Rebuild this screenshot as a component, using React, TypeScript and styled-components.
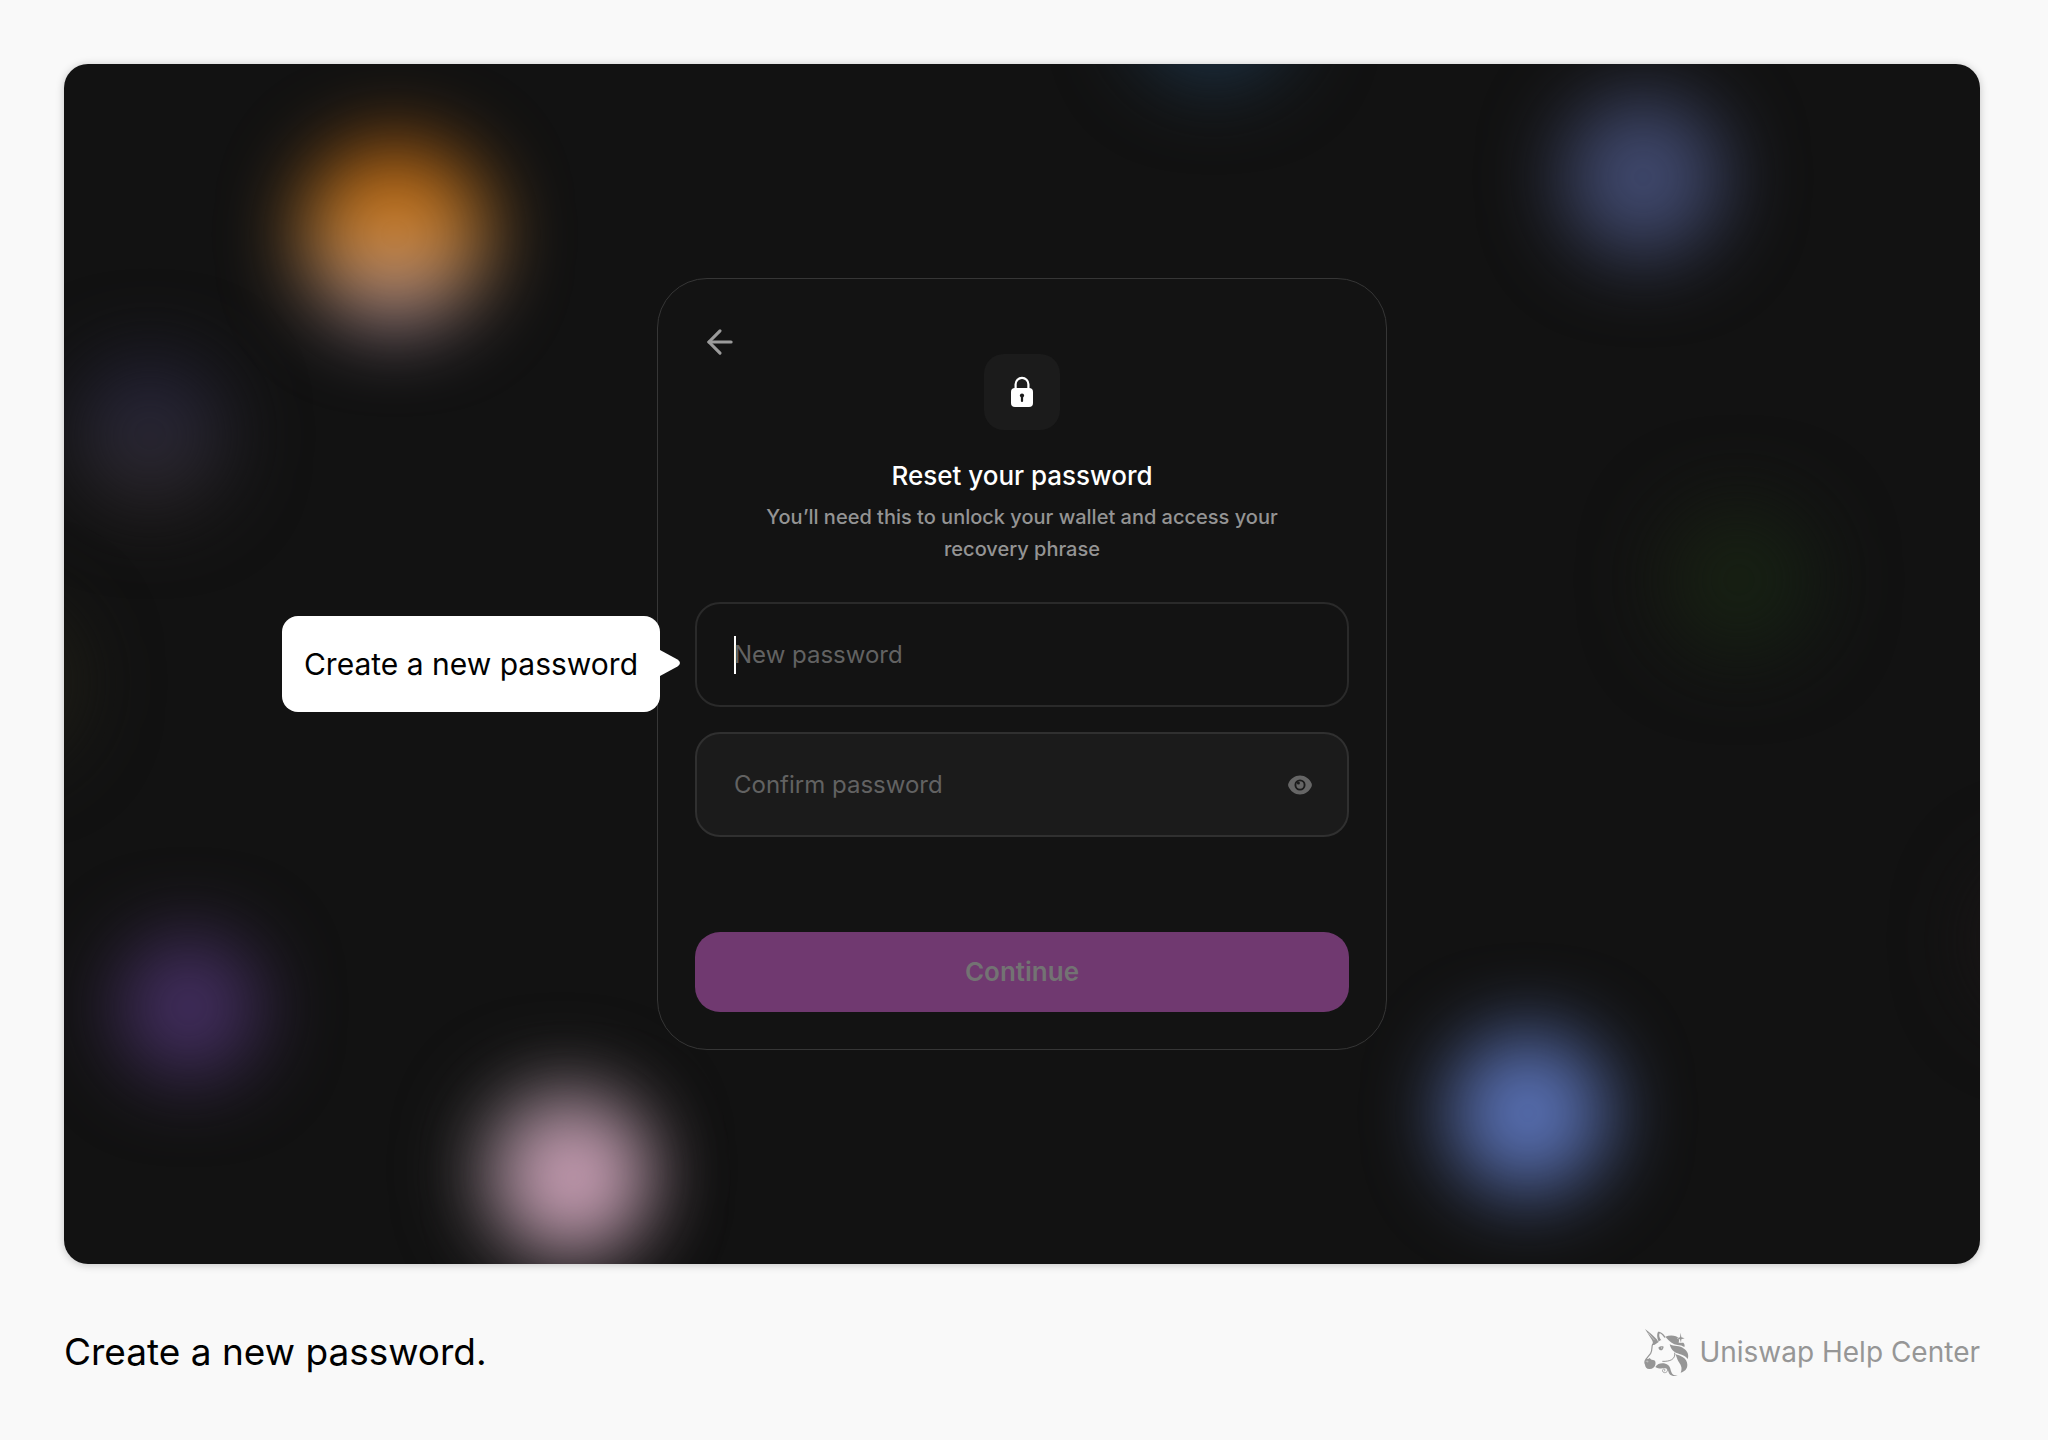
import React from "react";
import styled, { createGlobalStyle } from "styled-components";
import { ArrowLeft } from "lucide-react";

const GlobalStyle = createGlobalStyle`
  *, *::before, *::after { box-sizing: border-box; }
  body {
    margin: 0;
    background: #f9f9f9;
    color: #000;
    font-family: Inter, "Liberation Sans", sans-serif;
  }
`;

const Page = styled.div`
  display: flex;
  flex-direction: column;
  min-height: 100vh;
  padding: 64px 68px 0 64px;
`;

const Stage = styled.main`
  position: relative;
  flex: 1;
  display: flex;
  align-items: center;
  justify-content: center;
  overflow: hidden;
  border-radius: 24px;
  background: #121212;
  box-shadow: 0 1px 8px rgba(0, 0, 0, 0.22);
`;

const Glow = styled.span<{ $x: number; $y: number; $fill: string; $size?: number }>`
  position: absolute;
  left: ${(p) => p.$x}%;
  top: ${(p) => p.$y}%;
  width: ${(p) => p.$size ?? 160}px;
  height: ${(p) => p.$size ?? 160}px;
  border-radius: 50%;
  background: ${(p) => p.$fill};
  filter: blur(40px);
  transform: translate(-50%, -50%);
`;

const Card = styled.form`
  position: relative;
  display: flex;
  flex-direction: column;
  width: 730px;
  max-width: 100%;
  padding: 44px 37px 37px;
  border: 1px solid #363636;
  border-radius: 50px;
  background: #131313;
`;

const CardHeader = styled.header`
  display: grid;
  grid-template-columns: 1fr auto 1fr;
  align-items: start;
`;

const BackButton = styled.button`
  display: flex;
  justify-self: start;
  margin-left: 6px;
  padding: 0;
  border: 0;
  background: none;
  color: #9b9b9b;
  cursor: pointer;
`;

const LockTile = styled.div`
  display: flex;
  align-items: center;
  justify-content: center;
  width: 76px;
  height: 76px;
  margin-top: 31px;
  border-radius: 20px;
  background: #1b1b1b;
`;

const Title = styled.h1`
  margin: 29px 0 8px;
  color: #fff;
  font-size: 26px;
  font-weight: 500;
  line-height: 34px;
  text-align: center;
`;

const Subtitle = styled.p`
  margin: 0 60px 37px;
  color: #949494;
  font-size: 20px;
  font-weight: 500;
  line-height: 32px;
  text-align: center;
`;

const Fields = styled.div`
  display: flex;
  flex-direction: column;
  gap: 25px;
`;

const Field = styled.div<{ $active?: boolean }>`
  display: flex;
  align-items: center;
  height: 105px;
  padding: 0 35px 0 37px;
  border: 2px solid ${(p) => (p.$active ? "#2a2a2a" : "#303030")};
  border-radius: 25px;
  background: ${(p) => (p.$active ? "#131313" : "#1b1b1b")};
`;

const Caret = styled.span`
  width: 2px;
  height: 38px;
  margin-right: -2px;
  background: #fff;
`;

const PasswordInput = styled.input`
  flex: 1;
  min-width: 0;
  padding: 0;
  border: 0;
  outline: 0;
  background: transparent;
  color: #fff;
  font: 400 24px/32px Inter, "Liberation Sans", sans-serif;

  &::placeholder {
    color: #626262;
    opacity: 1;
  }
`;

const RevealButton = styled.button`
  display: flex;
  padding: 0;
  border: 0;
  background: none;
  color: #666;
  cursor: pointer;
`;

const ContinueButton = styled.button`
  height: 80px;
  margin-top: 95px;
  border: 0;
  border-radius: 25px;
  background: #703970;
  color: #737373;
  font: 600 26px/34px Inter, "Liberation Sans", sans-serif;
`;

const Callout = styled.div`
  position: absolute;
  top: 50%;
  right: calc(100% - 2px);
  display: flex;
  align-items: center;
  height: 96px;
  padding: 0 22px;
  border-radius: 16px;
  background: #fff;
  font-size: 30px;
  line-height: 40px;
  white-space: nowrap;
  transform: translateY(-50%);
`;

const CalloutPointer = styled.svg`
  position: absolute;
  left: 100%;
  top: 34px;
  fill: #fff;
`;

const Footer = styled.footer`
  display: flex;
  align-items: center;
  justify-content: space-between;
  min-height: 176px;
`;

const Caption = styled.p`
  margin: 0;
  font-size: 37px;
  line-height: 48px;
`;

const Brand = styled.div`
  display: flex;
  align-items: center;
  gap: 10px;
  color: #969696;
  font-size: 28px;
  line-height: 36px;
`;

const glows = [
  { x: 17.3, y: 14.2, fill: "linear-gradient(#b45e0a 10%, #d0862c 52%, #a58c9c 86%)", size: 184 },
  { x: 4.5, y: 30.8, fill: "linear-gradient(#232138 25%, #2e2c36 58%, #292123)", size: 150 },
  { x: 60, y: -5, fill: "#1d3347" },
  { x: 82.4, y: 9.4, fill: "#414a70" },
  { x: 87.4, y: 43, fill: "linear-gradient(110deg, #1a1f12, #142214)", size: 150 },
  { x: -3.5, y: 51.5, fill: "#201f16" },
  { x: 6.5, y: 78.6, fill: "#452f63", size: 140 },
  { x: 26, y: 92, fill: "#545153", size: 170 },
  { x: 26.6, y: 92.8, fill: "#d0a2ba", size: 134 },
  { x: 76.4, y: 87.4, fill: "#5971b5", size: 160 },
  { x: 104, y: 73, fill: "#1b1617" },
];

const LockIcon = () => (
  <svg width="24" height="32" viewBox="0 0 24 32" aria-hidden="true">
    <path d="M5.6 13V8.200a6.400 6.400 0 0 1 12.800 0V13" fill="none" stroke="#fff" strokeWidth="2.2" />
    <rect x="1" y="12" width="22" height="19" rx="4" fill="#fff" />
    <circle cx="12" cy="19.6" r="2.1" fill="#1b1b1b" />
    <path d="M12 19v6" stroke="#1b1b1b" strokeWidth="2.2" strokeLinecap="round" />
  </svg>
);

const EyeIcon = () => (
  <svg width="24" height="20" viewBox="0 0 24 20" aria-hidden="true">
    <path
      d="M12 .6C17.2.6 21.4 3.8 23.5 8.3c.5 1.1.5 2.3 0 3.4C21.4 16.2 17.2 19.4 12 19.4S2.6 16.2.5 11.7a4 4 0 0 1 0-3.4C2.6 3.8 6.8.6 12 .6Z"
      fill="currentColor"
    />
    <circle cx="12" cy="10" r="4.6" fill="currentColor" stroke="#1b1b1b" strokeWidth="1.9" />
    <circle cx="10.4" cy="7.9" r="1.5" fill="#1b1b1b" />
  </svg>
);

const UnicornLogo = () => (
  <svg width="45" height="48" viewBox="42 24 135 144" fill="currentColor" aria-hidden="true">
    <path d="M45 27C58 36 72 48 83 61L78 68 66 60C60 51 52 38 45 27Z" />
    <path d="M54 38L74 61" stroke="#f9f9f9" strokeWidth="1.5" />
    <path d="M85 62C81 53 80 42 84 35 94 35 102 43 107 52L103 53C98 46 94 41 89 40 86 45 88 54 94 61 90 61 88 63 85 66Z" />
    <path
      d="M81 64C77 68 75 71 68 73 64 80 68 90 62 100L47 119"
      fill="none"
      stroke="currentColor"
      strokeWidth="3.5"
    />
    <path d="M66 60L82 62 86 66 74 74 66 76C69 72 70 67 66 60Z" />
    <path d="M49 115C43 120 41 128 45 134 45 141 51 148 59 147 68 146 74 142 76 134 78 126 75 120 69 120 64 120 62 117 59 114 55 117 52 118 49 115Z" />
    <path d="M48 125C51 121 55 123 53 127" fill="none" stroke="#f9f9f9" strokeWidth="1.5" />
    <path d="M85 83C89 79 97 78 101 80 100 87 97 91 92 91 88 90 87 87 85 83Z" />
    <path d="M93 83C95 82 97 82 97 84 96 86 93 86 93 83Z" fill="#f9f9f9" />
    <path d="M97 124C120 125 137 118 134 98" fill="none" stroke="currentColor" strokeWidth="3" />
    <path d="M106 50C121 43 140 46 148 56L146 68 160 68C164 72 165 77 163 81 157 77 151 76 143 75 129 73 118 65 106 50Z" />
    <path
      d="M152 38L154 52 164 55 154 58 153 68 150 58 142 55 150 52Z"
      stroke="#f9f9f9"
      strokeWidth="1.5"
      paintOrder="stroke"
    />
    <path d="M119 73C132 80 149 75 162 86 174 94 177 106 173 117 167 108 158 105 148 102 133 98 123 90 119 73Z" />
    <path d="M136 102C149 107 172 112 172 134 172 147 164 154 152 158 159 142 150 132 145 124 141 117 140 110 136 102Z" />
    <path d="M76 141C85 127 104 128 114 135 124 143 120 157 130 164 134 166 138 167 143 165 133 171 121 168 117 160 114 153 115 148 110 146 101 143 88 149 76 141Z" />
    <path
      d="M112 147C115 156 105 161 99 156 95 151 99 145 104 148 107 151 104 153 102 152"
      fill="none"
      stroke="currentColor"
      strokeWidth="2.5"
    />
  </svg>
);

export default function App() {
  return (
    <Page>
      <GlobalStyle />
      <Stage>
        {glows.map((g, i) => (
          <Glow key={i} $x={g.x} $y={g.y} $fill={g.fill} $size={g.size} />
        ))}
        <Card onSubmit={(e) => e.preventDefault()}>
          <CardHeader>
            <BackButton type="button" aria-label="Back">
              <ArrowLeft size={38} strokeWidth={2} />
            </BackButton>
            <LockTile>
              <LockIcon />
            </LockTile>
          </CardHeader>
          <Title>Reset your password</Title>
          <Subtitle>You’ll need this to unlock your wallet and access your recovery phrase</Subtitle>
          <Fields>
            <Field $active>
              <Caret />
              <PasswordInput type="password" aria-label="New password" placeholder="New password" />
            </Field>
            <Field>
              <PasswordInput type="password" aria-label="Confirm password" placeholder="Confirm password" />
              <RevealButton type="button" aria-label="Show password">
                <EyeIcon />
              </RevealButton>
            </Field>
          </Fields>
          <ContinueButton type="submit">Continue</ContinueButton>
          <Callout>
            Create a new password
            <CalloutPointer width="20" height="26" viewBox="0 0 20 26" aria-hidden="true">
              <path d="M0 0 17.5 9.5Q22.5 13 17.5 16.5L0 26Z" />
            </CalloutPointer>
          </Callout>
        </Card>
      </Stage>
      <Footer>
        <Caption>Create a new password.</Caption>
        <Brand>
          <UnicornLogo />
          <span>Uniswap Help Center</span>
        </Brand>
      </Footer>
    </Page>
  );
}
